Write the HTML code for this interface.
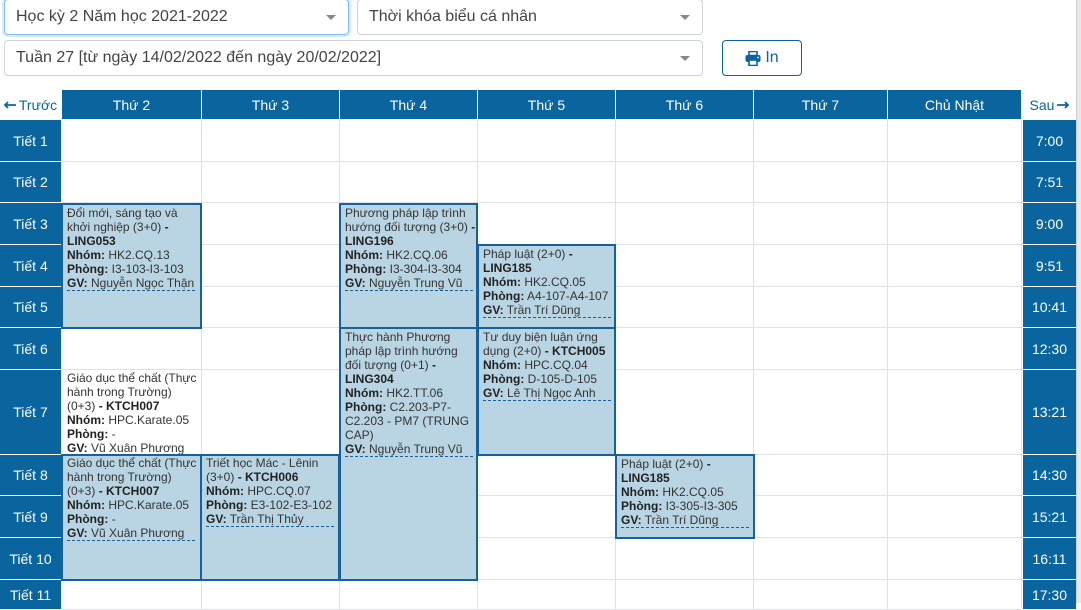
<!DOCTYPE html>
<html><head><meta charset="utf-8">
<style>
*{box-sizing:border-box;margin:0;padding:0}
body{width:1081px;height:603px;overflow:hidden;background:#fff;font-family:"Liberation Sans",Arial,sans-serif;position:relative;color:#333}
.a{position:absolute}
.sel{position:absolute;border:1px solid #ced4da;border-radius:4px;font-size:16px;color:#444;padding-left:11px;display:flex;align-items:center}
.sel .car{position:absolute;right:12px;top:50%;margin-top:-2px;border-left:5px solid transparent;border-right:5px solid transparent;border-top:5px solid #888}
.hd{position:absolute;background:#0a659e;color:#fff;font-size:14px;display:flex;align-items:center;justify-content:center}
.cell{position:absolute;border-right:1px solid #dee2e6;border-bottom:1px solid #dee2e6;background:#fff}
.blk{position:absolute;background:#b9d5e4;border:2px solid #17609a;font-size:12px;line-height:14px;color:#333;padding:1px 1px 0 4px;white-space:nowrap;overflow:hidden}
.blk b,.pl b{color:#222}
.gv{display:inline-block;border-bottom:1px dashed #17609a;width:128px}
.pl{position:absolute;font-size:12px;line-height:14px;color:#333;padding:0 2px 0 5px;white-space:nowrap}
.nav{position:absolute;color:#0a659e;font-size:14px;display:flex;align-items:center;justify-content:center;white-space:nowrap;gap:3px}
</style></head><body>
<div class="sel" style="left:4px;top:-1px;width:345px;height:36px;border-color:#80bdff;box-shadow:0 0 0 2px rgba(0,123,255,.15)">Học kỳ 2 Năm học 2021-2022<span class="car"></span></div>
<div class="sel" style="left:357px;top:-1px;width:346px;height:36px">Thời khóa biểu cá nhân<span class="car"></span></div>
<div class="sel" style="left:4px;top:40px;width:699px;height:36px">Tuần 27 [từ ngày 14/02/2022 đến ngày 20/02/2022]<span class="car"></span></div>
<div class="a" style="left:722px;top:40px;width:80px;height:36px;border:1px solid #0a659e;border-radius:4px;color:#0a659e;font-size:16px;display:flex;align-items:center;justify-content:center;gap:4px">
<svg width="16" height="15" viewBox="0 0 16 15"><rect x="4" y="0.5" width="8" height="4" fill="none" stroke="#0a659e" stroke-width="1.6"/><rect x="0.5" y="4" width="15" height="7" rx="2" fill="#0a659e"/><rect x="4" y="9" width="8" height="5.5" fill="#fff" stroke="#0a659e" stroke-width="1.6"/><circle cx="13" cy="6.5" r="0.9" fill="#fff"/></svg>In</div>

<div class="nav" style="left:0;top:90px;width:61px;height:29px"><svg width="12" height="8" viewBox="0 0 12 8"><path d="M12 4H2M4 1L1 4l3 3" stroke="#0a659e" stroke-width="1.8" fill="none"/></svg>Trước</div>
<div class="nav" style="left:1023px;top:90px;width:53px;height:29px">Sau<svg width="12" height="8" viewBox="0 0 12 8"><path d="M0 4h10M8 1l3 3-3 3" stroke="#0a659e" stroke-width="1.8" fill="none"/></svg></div>
<div class="hd" style="left:62px;top:90px;width:139px;height:29px">Thứ 2</div>
<div class="hd" style="left:202px;top:90px;width:137px;height:29px">Thứ 3</div>
<div class="hd" style="left:340px;top:90px;width:137px;height:29px">Thứ 4</div>
<div class="hd" style="left:478px;top:90px;width:137px;height:29px">Thứ 5</div>
<div class="hd" style="left:616px;top:90px;width:137px;height:29px">Thứ 6</div>
<div class="hd" style="left:754px;top:90px;width:133px;height:29px">Thứ 7</div>
<div class="hd" style="left:888px;top:90px;width:133px;height:29px">Chủ Nhật</div>
<div class="a" style="left:1076px;top:0;width:5px;height:603px;background:#e8e8e8;border-left:1px solid #d0d0d0"></div>

<div id="g"></div>
<script>
var xs=[62,202,340,478,616,754,888],ws=[140,138,138,138,138,134,134];
var ys=[120,162,203,245,287,328,370,455,496,538,580],hs=[42,41,42,42,41,42,85,41,42,42,30];
var times=["7:00","7:51","9:00","9:51","10:41","12:30","13:21","14:30","15:21","16:11","17:30"];
var h="";
for(var r=0;r<11;r++){
 h+='<div class="hd" style="left:0;top:'+ys[r]+'px;width:61px;height:'+(hs[r]-1)+'px">Tiết '+(r+1)+'</div>';
 h+='<div class="hd" style="left:1023px;top:'+ys[r]+'px;width:53px;height:'+(hs[r]-1)+'px">'+times[r]+'</div>';
 for(var c=0;c<7;c++) h+='<div class="cell" style="left:'+xs[c]+'px;top:'+ys[r]+'px;width:'+ws[c]+'px;height:'+hs[r]+'px"></div>';
}
document.getElementById("g").innerHTML=h;
</script>

<div class="blk" style="left:61px;top:203px;width:141px;height:126px">Đổi mới, sáng tạo và<br>khởi nghiệp (3+0) <b>-<br>LING053</b><br><b>Nhóm:</b> HK2.CQ.13<br><b>Phòng:</b> I3-103-I3-103<br><span class="gv"><b>GV:</b> Nguyễn Ngọc Thận</span></div>
<div class="blk" style="left:339px;top:203px;width:139px;height:126px">Phương pháp lập trình<br>hướng đối tượng (3+0) <b>-</b><br><b>LING196</b><br><b>Nhóm:</b> HK2.CQ.06<br><b>Phòng:</b> I3-304-I3-304<br><span class="gv"><b>GV:</b> Nguyễn Trung Vũ</span></div>
<div class="blk" style="left:477px;top:244px;width:139px;height:85px">Pháp luật (2+0) <b>-<br>LING185</b><br><b>Nhóm:</b> HK2.CQ.05<br><b>Phòng:</b> A4-107-A4-107<br><span class="gv"><b>GV:</b> Trần Trí Dũng</span></div>
<div class="blk" style="left:339px;top:327px;width:139px;height:254px">Thực hành Phương<br>pháp lập trình hướng<br>đối tượng (0+1) <b>-<br>LING304</b><br><b>Nhóm:</b> HK2.TT.06<br><b>Phòng:</b> C2.203-P7-<br>C2.203 - PM7 (TRUNG<br>CAP)<br><span class="gv"><b>GV:</b> Nguyễn Trung Vũ</span></div>
<div class="blk" style="left:477px;top:327px;width:139px;height:129px">Tư duy biện luận ứng<br>dụng (2+0) <b>- KTCH005</b><br><b>Nhóm:</b> HPC.CQ.04<br><b>Phòng:</b> D-105-D-105<br><span class="gv"><b>GV:</b> Lê Thị Ngọc Anh</span></div>
<div class="pl" style="left:62px;top:371px;width:140px">Giáo dục thể chất (Thực<br>hành trong Trường)<br>(0+3) <b>- KTCH007</b><br><b>Nhóm:</b> HPC.Karate.05<br><b>Phòng:</b> -<br><b>GV:</b> Vũ Xuân Phương</div>
<div class="blk" style="left:61px;top:454px;width:141px;height:127px;padding-top:0">Giáo dục thể chất (Thực<br>hành trong Trường)<br>(0+3) <b>- KTCH007</b><br><b>Nhóm:</b> HPC.Karate.05<br><b>Phòng:</b> -<br><span class="gv"><b>GV:</b> Vũ Xuân Phương</span></div>
<div class="blk" style="left:200px;top:454px;width:140px;height:127px;padding-top:0">Triết học Mác - Lênin<br>(3+0) <b>- KTCH006</b><br><b>Nhóm:</b> HPC.CQ.07<br><b>Phòng:</b> E3-102-E3-102<br><span class="gv"><b>GV:</b> Trần Thị Thủy</span></div>
<div class="blk" style="left:615px;top:454px;width:140px;height:85px">Pháp luật (2+0) <b>-<br>LING185</b><br><b>Nhóm:</b> HK2.CQ.05<br><b>Phòng:</b> I3-305-I3-305<br><span class="gv"><b>GV:</b> Trần Trí Dũng</span></div>
</body></html>
